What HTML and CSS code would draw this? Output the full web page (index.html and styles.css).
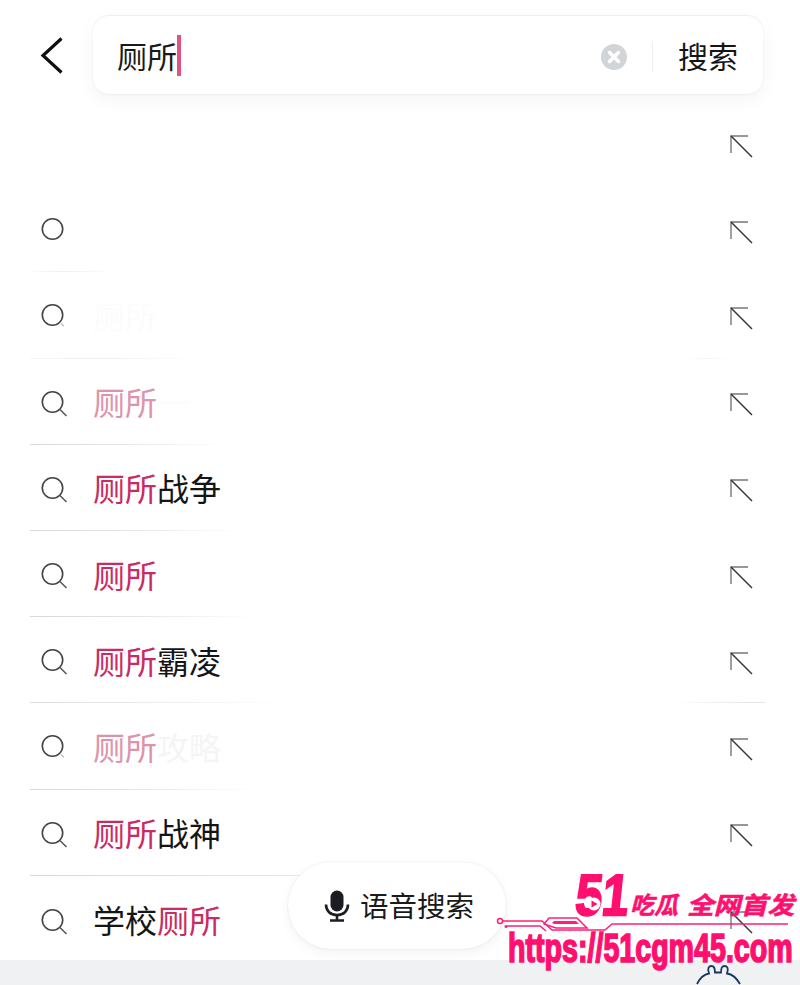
FILE: index.html
```html
<!DOCTYPE html>
<html lang="zh">
<head>
<meta charset="utf-8">
<title>搜索</title>
<link rel="stylesheet" href="styles.css">
</head>
<body>
<svg class="defs" aria-hidden="true">
  <symbol id="i-search" viewBox="0 -2.500 28 28" overflow="visible"><circle cx="11.500" cy="11.500" r="10.200" class="ln-a"/><path d="M19 19l6.500 6.500" class="ln-b"/></symbol>
  <symbol id="i-search-faint" viewBox="0 -2.500 28 28" overflow="visible"><circle cx="11.500" cy="11.500" r="10.200" class="ln-a"/><path d="M20 20l3 2.800" class="ln-c"/></symbol>
  <symbol id="i-circle" viewBox="0 -2.500 28 28" overflow="visible"><circle cx="11.500" cy="11.500" r="10.200" class="ln-a"/></symbol>
  <symbol id="i-arrow" viewBox="0 0 24 24"><path d="M1 18V1h17" class="ln-d"/><path d="M1 1l21 21" class="ln-e"/></symbol>
</svg>
<main class="page">
  <header class="top">
    <button class="back" aria-label="返回">
      <svg class="back-icon" viewBox="0 0 24 40"><path d="M21.500 2.500L3 19.500l18.500 17" class="back-line"/></svg>
    </button>
    <div class="searchbox">
      <span class="query">厕所</span><span class="caret"></span>
      <svg class="clear" viewBox="0 0 26 26"><circle cx="13" cy="13" r="13" class="clear-bg"/><path d="M8.500 8.500l9 9M17.500 8.500l-9 9" class="clear-x"/></svg>
      <span class="divider"></span>
      <span class="go">搜索</span>
    </div>
  </header>
  <ul class="list">
    <li class="row sep-0"><span class="ic"></span><span class="tx"></span><svg class="arrow"><use href="#i-arrow"/></svg></li>
    <li class="row sep-1"><svg class="ic"><use href="#i-circle"/></svg><span class="tx"></span><svg class="arrow"><use href="#i-arrow"/></svg></li>
    <li class="row sep-2"><svg class="ic"><use href="#i-search-faint"/></svg><span class="tx ghost">厕所</span><svg class="arrow"><use href="#i-arrow"/></svg></li>
    <li class="row sep-3"><svg class="ic"><use href="#i-search"/></svg><span class="tx"><em class="hl-soft">厕所</em><span class="ghost">一</span></span><svg class="arrow"><use href="#i-arrow"/></svg></li>
    <li class="row sep-4"><svg class="ic"><use href="#i-search"/></svg><span class="tx"><em class="hl">厕所</em>战争</span><svg class="arrow"><use href="#i-arrow"/></svg></li>
    <li class="row sep-5"><svg class="ic"><use href="#i-search"/></svg><span class="tx"><em class="hl">厕所</em></span><svg class="arrow"><use href="#i-arrow"/></svg></li>
    <li class="row sep-6"><svg class="ic"><use href="#i-search"/></svg><span class="tx"><em class="hl">厕所</em>霸凌</span><svg class="arrow"><use href="#i-arrow"/></svg></li>
    <li class="row sep-7"><svg class="ic"><use href="#i-search-faint"/></svg><span class="tx"><em class="hl-soft">厕所</em><span class="ghost-2">攻略</span></span><svg class="arrow"><use href="#i-arrow"/></svg></li>
    <li class="row sep-8"><svg class="ic"><use href="#i-search"/></svg><span class="tx"><em class="hl">厕所</em>战神</span><svg class="arrow"><use href="#i-arrow"/></svg></li>
    <li class="row last"><svg class="ic"><use href="#i-search"/></svg><span class="tx">学校<em class="hl">厕所</em></span><svg class="arrow"><use href="#i-arrow"/></svg></li>
  </ul>
  <footer class="bar">
    <svg class="bunny" viewBox="0 0 48 20"><path d="M3 19C7 11 12 9 15 8.500C13 3 15 1 17.500 1C20 1 21 3 21 7.500H27C27 3 28 1 30.500 1C33 1 35 3 33 8.500C37 9 42 12 46 19" class="bunny-line"/></svg>
  </footer>

  <button class="voice">
    <svg class="mic" viewBox="0 0 26 32"><rect x="6.500" y="0.500" width="13" height="21" rx="6.500" class="mic-fill"/><path d="M2 14.500c0 6.500 4.500 10.500 11 10.500s11-4 11-10.500M13 25v5M6 30.500h14" class="mic-line"/></svg>
    <span>语音搜索</span>
  </button>

  <svg class="mark" viewBox="0 0 310 120" role="img">
    <text class="m51">51</text>
    <circle cx="104" cy="39" r="6.500" class="m-hole"/>
    <path d="M101.500 35.500l6 3.500-6 3.500z" class="m-play"/>
    <text class="mcn mcn-a">吃瓜</text>
    <text class="mcn mcn-b">全网首发</text>
    <g class="m-circuit">
      <circle cx="10" cy="56" r="2.500" class="m-ring"/>
      <path d="M12 56H52L62 65H96L106 65H115L122 59H298"/>
      <path d="M17 61H50L56 66"/>
      <path d="M54 59L59 53H87L97 63H66Z"/>
    </g>
    <circle cx="16" cy="61.500" r="1.500" class="m-dot"/>
    <path d="M62 58L64 56H86L89 59H64Z" class="m-dot"/>
    <text class="murl">https://51cgm45.com</text>
  </svg>
</main>
</body>
</html>
```

FILE: styles.css
```css
* { box-sizing: border-box; }
html, body { margin: 0; padding: 0; background: #fff; }
body { font-family: "Noto Sans CJK SC", "Noto Sans", sans-serif; color: #111; }
.defs { display: none; }

.page {
  position: relative;
  width: 800px;
  height: 985px;
  overflow: hidden;
  display: flex;
  flex-direction: column;
  background: #fff;
}

.top {
  height: 100px;
  flex: none;
  display: flex;
  align-items: flex-start;
  padding: 16px 37px 0 0;
}
.back {
  width: 93px;
  height: 80px;
  flex: none;
  padding: 0 0 0 40px;
  border: 0;
  background: none;
  display: flex;
  align-items: center;
}
.back-icon { width: 24px; height: 40px; }
.back-line { fill: none; stroke: #111; stroke-width: 3.200; }
.searchbox {
  flex: 1;
  height: 78px;
  display: flex;
  align-items: center;
  padding: 0 25px 0 24px;
  background: #fff;
  border-radius: 16px;
  box-shadow: 0 -1px 1px rgba(0,0,0,.06), 0 1px 2px rgba(0,0,0,.05), 0 6px 20px rgba(0,0,0,.045);
}
.query { font-size: 30px; line-height: 40px; color: #1a1a1a; }
.caret { width: 4px; height: 41px; background: #e0557f; }
.clear { width: 26px; height: 26px; margin: 3px 0 0 auto; position: relative; left: 1px; }
.clear-bg { fill: #d2d5d8; }
.clear-x { stroke: #fff; stroke-width: 3.500; stroke-linecap: round; fill: none; }
.divider { width: 1px; height: 31px; background: #eeeeee; margin: 3px 25px 0 26px; }
.go { font-size: 30px; line-height: 40px; color: #151515; }

.list { list-style: none; margin: 0; padding: 0; flex: none; }
.row {
  --w: 200px;
  height: 86.200px;
  display: flex;
  align-items: center;
  padding: 0 46px 0 41px;
  background: linear-gradient(90deg, #d8d8d8, #e4e4e4 45%, rgba(230,230,230,0)) no-repeat 30px 100% / var(--w) 1px;
}
.sep-0 { background: none; }
.sep-1 { --w: 85px; background-image: linear-gradient(90deg, rgba(225,225,225,.1), #efefef 40%, rgba(240,240,240,0)); }
.sep-2 {
  --w: 170px;
  background-image: linear-gradient(90deg, rgba(225,225,225,.3), #eeeeee 40%, rgba(240,240,240,0)), linear-gradient(90deg, rgba(240,240,240,0), #f3f3f3, rgba(240,240,240,0));
  background-repeat: no-repeat;
  background-position: 30px 100%, 685px 100%;
  background-size: var(--w) 1px, 45px 1px;
}
.sep-3 { --w: 195px; }
.sep-4 { --w: 210px; }
.sep-5 { --w: 225px; }
.sep-6 {
  --w: 255px;
  background-image: linear-gradient(90deg, #dddddd, #eaeaea 45%, rgba(235,235,235,0)), linear-gradient(90deg, rgba(235,235,235,0), #eaeaea 60%, #e6e6e6);
  background-repeat: no-repeat;
  background-position: 30px 100%, 675px 100%;
  background-size: var(--w) 1px, 90px 1px;
}
.sep-7 { --w: 225px; }
.sep-8 { --w: 505px; }
.last { height: 84px; padding-top: 4px; background: none; }

.ic { width: 28px; height: 28px; flex: none; margin-right: 24px; overflow: visible; }
.ln-a { fill: none; stroke: #444; stroke-width: 1.600; }
.ln-b { fill: none; stroke: #555; stroke-width: 1.500; }
.ln-c { fill: none; stroke: #bbb; stroke-width: 1.200; }
.ln-d { fill: none; stroke: #777; stroke-width: 1.400; }
.ln-e { fill: none; stroke: #333; stroke-width: 1.400; }

.tx { flex: 1; font-size: 32px; line-height: 42px; color: #151515; white-space: nowrap; margin-top: -1px; }
.tx em { font-style: normal; }
.hl { color: #c92c62; }
.hl-soft { color: #dd94ab; }
.ghost { color: #fcfcfc; }
.ghost-2 { color: #f5f5f5; }

.arrow { width: 24px; height: 24px; flex: none; margin-top: 7px; overflow: visible; }

.bar {
  flex: 1;
  background: #eff1f3;
  display: flex;
  justify-content: flex-end;
  align-items: flex-end;
  padding-right: 58px;
  overflow: hidden;
}
.bunny { width: 48px; height: 20px; flex: none; }
.bunny-line { fill: none; stroke: #1d3563; stroke-width: 1.800; }

.voice {
  position: absolute;
  left: 288px;
  top: 862px;
  width: 218px;
  height: 87px;
  display: flex;
  align-items: center;
  justify-content: flex-start;
  gap: 10px;
  padding: 0 0 2px 36px;
  border: 0;
  border-radius: 44px;
  background: #fff;
  font-family: inherit;
  font-size: 28.500px;
  color: #1a1a1a;
  box-shadow: 0 0 2px rgba(0,0,0,.1), 0 4px 12px rgba(0,0,0,.05);
}
.mic { width: 26px; height: 32px; flex: none; margin-top: 2px; }
.mic-fill { fill: #1c1d22; }
.mic-line { fill: none; stroke: #1c1d22; stroke-width: 2.600; }

.mark { position: absolute; left: 490px; top: 865px; width: 310px; height: 120px; overflow: visible; }
.m51 { font-family: "Liberation Sans", sans-serif; font-weight: 700; font-size: 58px; fill: #ff0f6e; stroke: #ff0f6e; stroke-width: 2.400px; transform: translate(84px, 50px) skewX(-6deg) scaleX(.82); }
.m-hole { fill: #fff; }
.m-play { fill: #ff0f6e; }
.mcn { font-family: "Noto Sans CJK SC", sans-serif; font-weight: 700; font-size: 24px; fill: #ff0f6e; stroke: #ff0f6e; stroke-width: .6px; }
.mcn-a { transform: translate(140px, 49px) skewX(-14deg); }
.mcn-b { transform: translate(197px, 49px) skewX(-14deg) scaleX(1.120); }
.m-circuit path { fill: none; stroke: #ff1f78; stroke-width: 1.500; }
.m-ring { fill: #fff; stroke: #ff1f78; stroke-width: 1.500; }
.m-dot { fill: #ff1f78; }
.murl { font-family: "Liberation Sans", sans-serif; font-weight: 700; font-size: 40px; fill: #ff0f6e; stroke: #ff0f6e; stroke-width: 1.700px; transform: translate(18px, 97px) scaleX(.716); }
```
